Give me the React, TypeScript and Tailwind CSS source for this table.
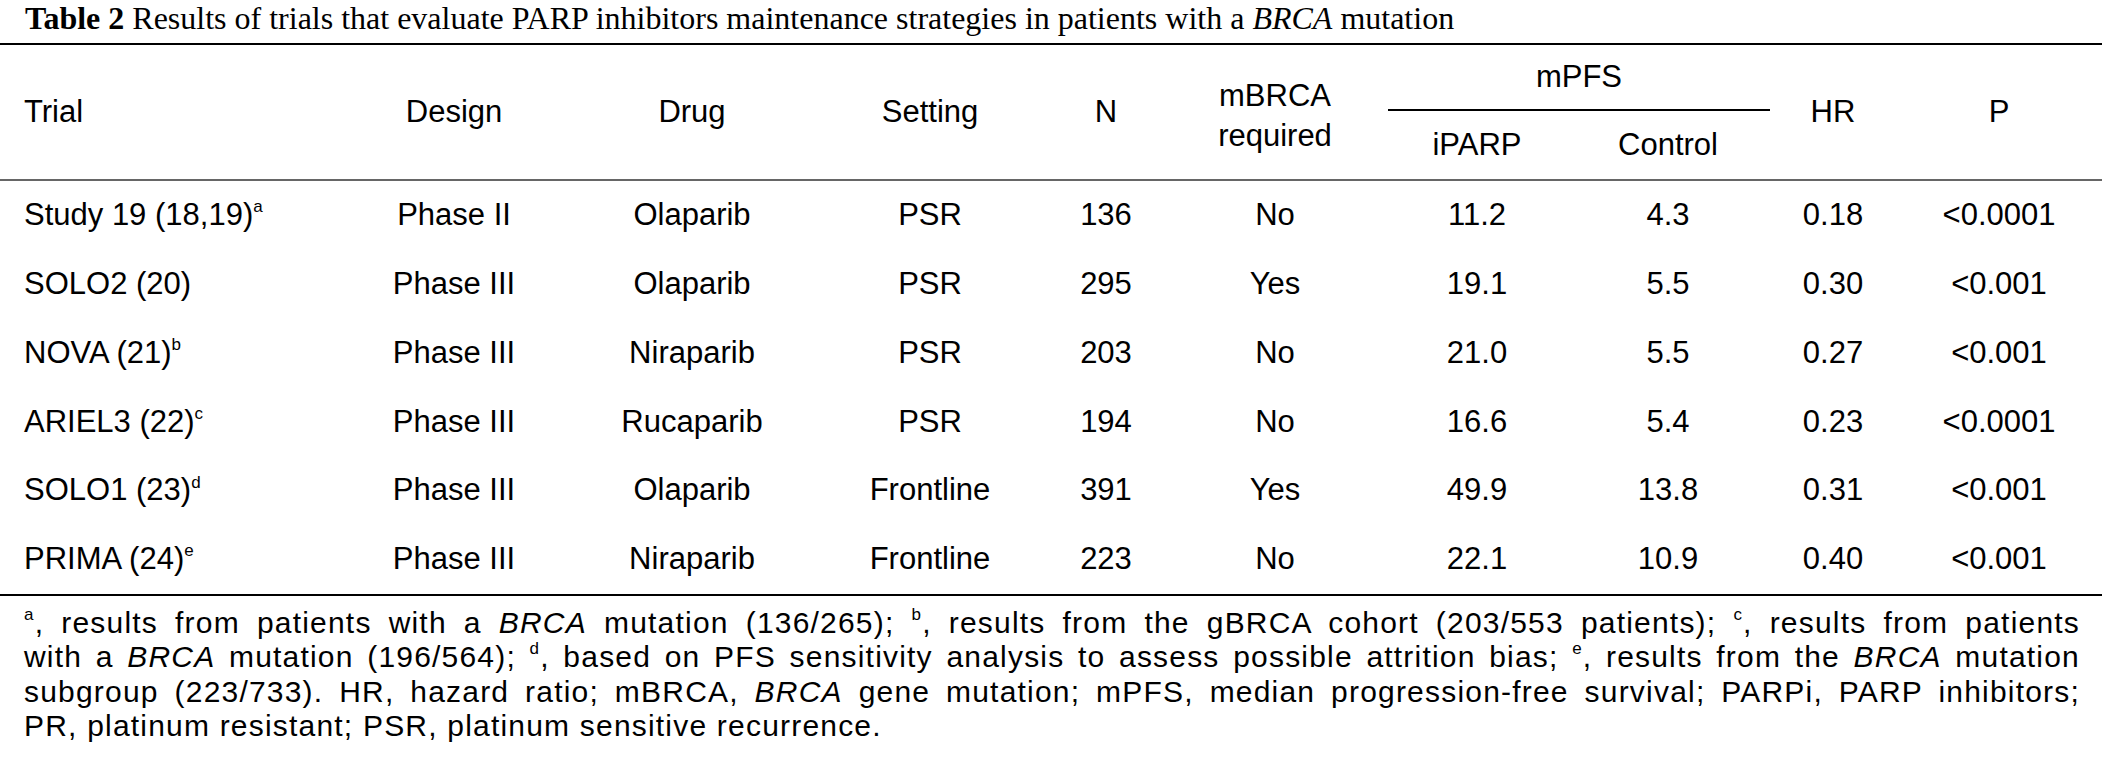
import React from 'react';

const cols = 'grid grid-cols-[334px_240px_236px_240px_112px_226px_178px_204px_126px_206px]';

const rows = [
    { trial: 'Study 19 (18,19)', sup: 'a', design: 'Phase II', drug: 'Olaparib', setting: 'PSR', n: '136', req: 'No', iparp: '11.2', control: '4.3', hr: '0.18', p: '<0.0001' },
    { trial: 'SOLO2 (20)', sup: '', design: 'Phase III', drug: 'Olaparib', setting: 'PSR', n: '295', req: 'Yes', iparp: '19.1', control: '5.5', hr: '0.30', p: '<0.001' },
    { trial: 'NOVA (21)', sup: 'b', design: 'Phase III', drug: 'Niraparib', setting: 'PSR', n: '203', req: 'No', iparp: '21.0', control: '5.5', hr: '0.27', p: '<0.001' },
    { trial: 'ARIEL3 (22)', sup: 'c', design: 'Phase III', drug: 'Rucaparib', setting: 'PSR', n: '194', req: 'No', iparp: '16.6', control: '5.4', hr: '0.23', p: '<0.0001' },
    { trial: 'SOLO1 (23)', sup: 'd', design: 'Phase III', drug: 'Olaparib', setting: 'Frontline', n: '391', req: 'Yes', iparp: '49.9', control: '13.8', hr: '0.31', p: '<0.001' },
    { trial: 'PRIMA (24)', sup: 'e', design: 'Phase III', drug: 'Niraparib', setting: 'Frontline', n: '223', req: 'No', iparp: '22.1', control: '10.9', hr: '0.40', p: '<0.001' },
];

const Sup: React.FC<{ children: React.ReactNode }> = ({ children }) => (
    <sup className="text-[17px] top-[-0.75em]">{children}</sup>
);

// lines are broken where the reference breaks them; every line but the last is justified
const jl = 'text-justify [text-align-last:justify]';

export default function App() {
    return (
        <div className="w-[2102px] h-[779px] bg-white text-black overflow-hidden">
            <div className="h-[43px] pl-[25px] text-[32px] leading-[36px] font-['Liberation_Serif',serif]">
                <span className="font-bold">Table 2</span> Results of trials that evaluate PARP inhibitors maintenance strategies in patients with a <i>BRCA</i> mutation
            </div>
            <div className="font-['Liberation_Sans',Arial,sans-serif] text-[31px]">
                <div className={`${cols} border-t-2 border-black border-b-2 border-b-[#666] grid-rows-[66px_68px] text-center`}>
                    <div className="row-span-2 flex items-center pl-[24px] text-left">Trial</div>
                    <div className="row-span-2 flex items-center justify-center">Design</div>
                    <div className="row-span-2 flex items-center justify-center">Drug</div>
                    <div className="row-span-2 flex items-center justify-center">Setting</div>
                    <div className="row-span-2 flex items-center justify-center">N</div>
                    <div className="row-span-2 flex items-center justify-center pt-[8px] leading-[40px]">mBRCA<br />required</div>
                    <div className="col-span-2 flex items-center justify-center border-b-2 border-black">mPFS</div>
                    <div className="row-span-2 flex items-center justify-center">HR</div>
                    <div className="row-span-2 flex items-center justify-center">P</div>
                    <div className="flex items-center justify-center">iPARP</div>
                    <div className="flex items-center justify-center">Control</div>
                </div>
                <div className="border-b-2 border-black">
                    {rows.map((r) => (
                        <div key={r.trial} className={`${cols} h-[68.8px] items-center text-center`}>
                            <div className="pl-[24px] text-left">{r.trial}{r.sup && <Sup>{r.sup}</Sup>}</div>
                            <div>{r.design}</div>
                            <div>{r.drug}</div>
                            <div>{r.setting}</div>
                            <div>{r.n}</div>
                            <div>{r.req}</div>
                            <div>{r.iparp}</div>
                            <div>{r.control}</div>
                            <div>{r.hr}</div>
                            <div>{r.p}</div>
                        </div>
                    ))}
                </div>
                <div className="pl-[24px] pr-[22px] pt-[10px] text-[30px] leading-[34.4px] tracking-[1.2px]">
                    <div className={jl}>
                        <Sup>a</Sup>, results from patients with a <i>BRCA</i> mutation (136/265); <Sup>b</Sup>, results from the gBRCA cohort (203/553 patients); <Sup>c</Sup>, results from patients
                    </div>
                    <div className={jl}>
                        with a <i>BRCA</i> mutation (196/564); <Sup>d</Sup>, based on PFS sensitivity analysis to assess possible attrition bias; <Sup>e</Sup>, results from the <i>BRCA</i> mutation
                    </div>
                    <div className={jl}>
                        subgroup (223/733). HR, hazard ratio; mBRCA, <i>BRCA</i> gene mutation; mPFS, median progression-free survival; PARPi, PARP inhibitors;
                    </div>
                    <div>PR, platinum resistant; PSR, platinum sensitive recurrence.</div>
                </div>
            </div>
        </div>
    );
}
